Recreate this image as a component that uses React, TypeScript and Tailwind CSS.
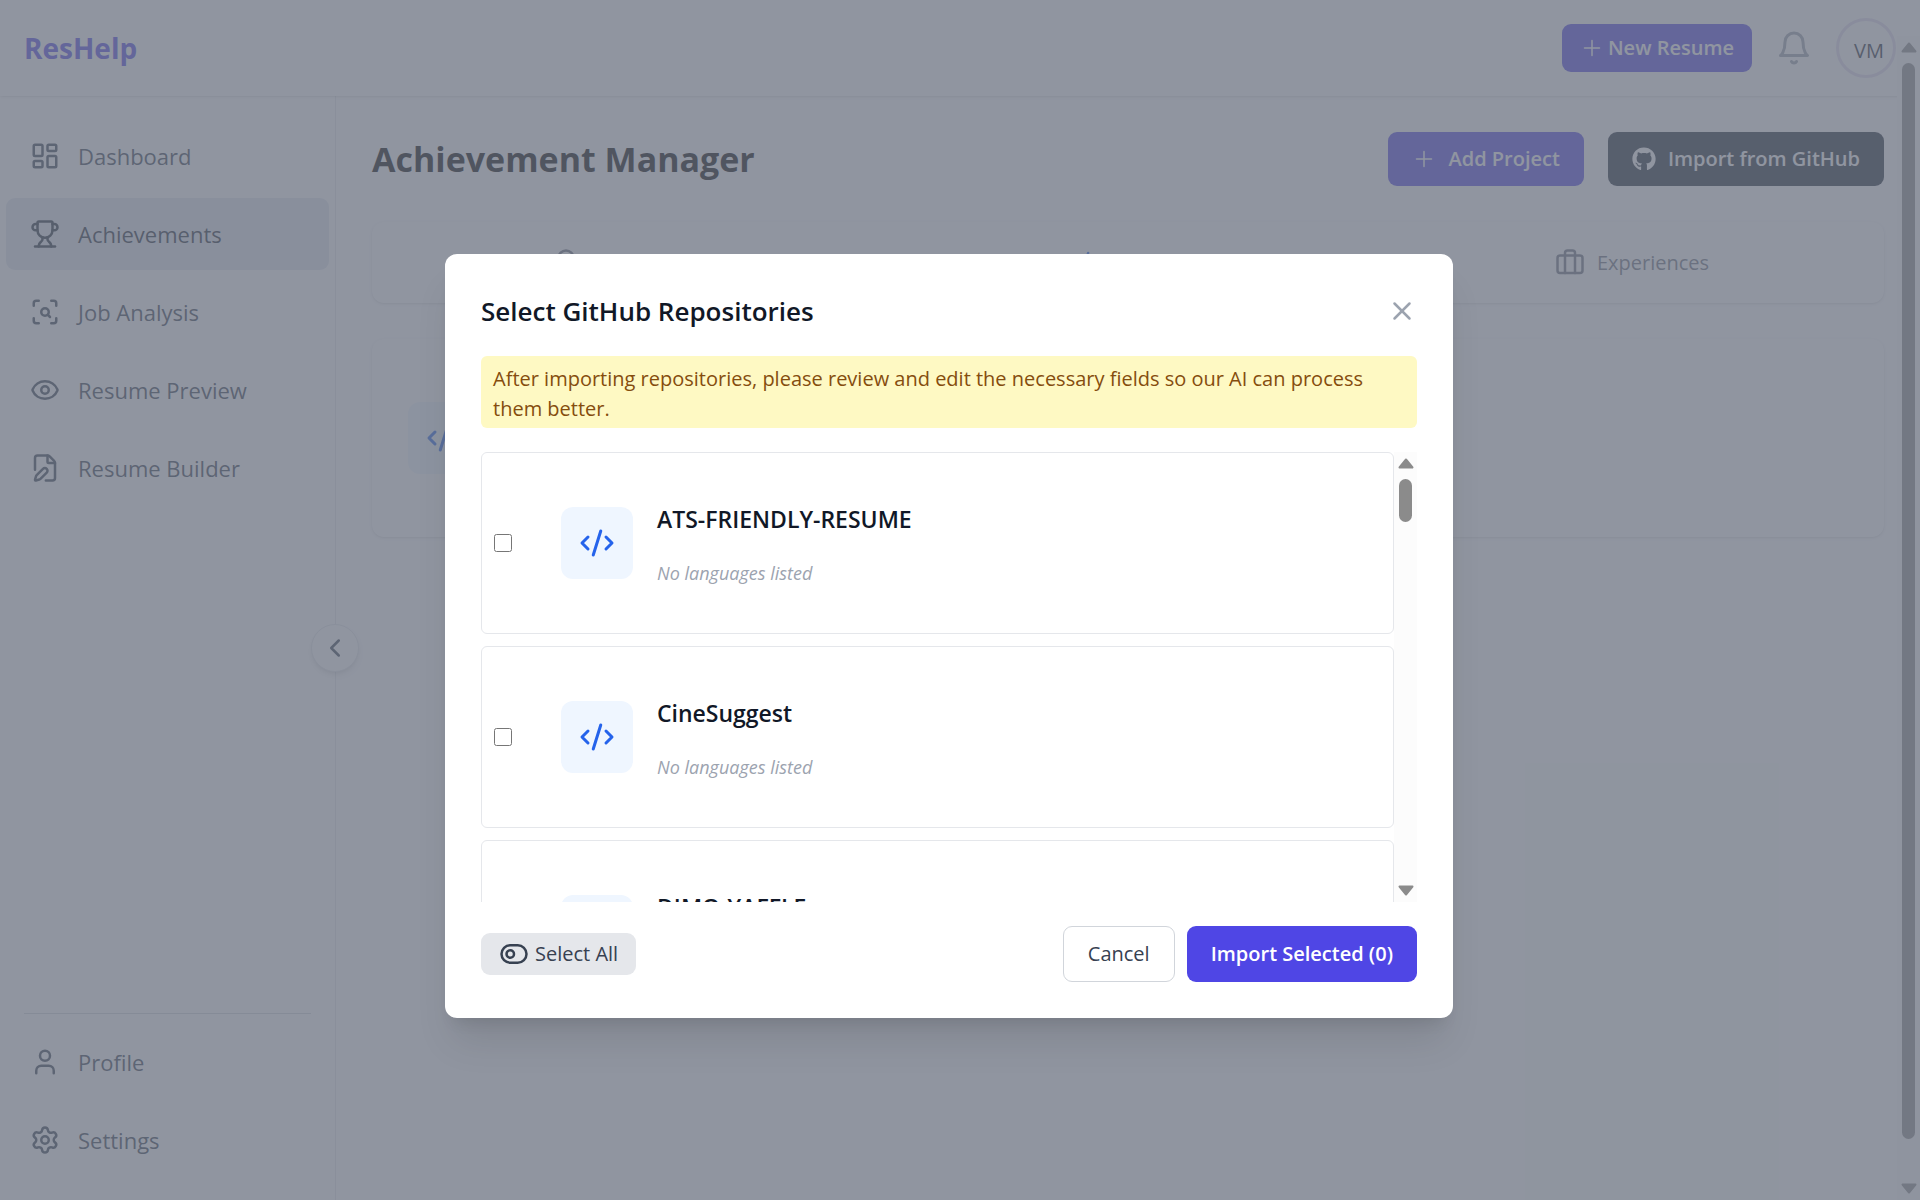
import { useState, type ReactNode } from "react";
import {
  Award,
  Briefcase,
  ChevronLeft,
  CodeXml,
  Eye,
  FilePen,
  LayoutDashboard,
  ScanSearch,
  Settings,
  ToggleLeft,
  Trophy,
  User,
  X,
  type LucideIcon,
} from "lucide-react";
import { FaGithub } from "react-icons/fa";

const mainNav: { label: string; icon: LucideIcon; active?: boolean }[] = [
  { label: "Dashboard", icon: LayoutDashboard },
  { label: "Achievements", icon: Trophy, active: true },
  { label: "Job Analysis", icon: ScanSearch },
  { label: "Resume Preview", icon: Eye },
  { label: "Resume Builder", icon: FilePen },
];

const accountNav: { label: string; icon: LucideIcon; active?: boolean }[] = [
  { label: "Profile", icon: User },
  { label: "Settings", icon: Settings },
];

const repositories = ["ATS-FRIENDLY-RESUME", "CineSuggest", "DIMO-YAFFLE"];

function PlusIcon() {
  return (
    <svg viewBox="0 0 24 24" className="size-6 shrink-0" fill="none" stroke="currentColor" strokeWidth="1.5" strokeLinecap="round" aria-hidden="true">
      <path d="M12 4.5v15m7.5-7.5h-15" />
    </svg>
  );
}

function BellIcon() {
  return (
    <svg viewBox="0 0 24 24" className="size-9" fill="none" stroke="currentColor" strokeWidth="2" strokeLinecap="round" strokeLinejoin="round" aria-hidden="true">
      <path d="M6 8a6 6 0 0 1 12 0c0 7 3 9 3 9H3s3-2 3-9" />
      <path d="M10.3 21a1.94 1.94 0 0 0 3.4 0" />
    </svg>
  );
}

function ScrollArrow({ down = false }: { down?: boolean }) {
  return (
    <svg viewBox="0 0 16 11" className={down ? "h-[11px] w-4 rotate-180" : "h-[11px] w-4"} aria-hidden="true">
      <path d="M8 1.5 14.5 9.5H1.5Z" fill="#8b8b8b" stroke="#8b8b8b" strokeWidth="2" strokeLinejoin="round" />
    </svg>
  );
}

function NavItem({ label, icon: Icon, active }: { label: string; icon: LucideIcon; active?: boolean }) {
  return (
    <a
      href="#"
      aria-current={active ? "page" : undefined}
      className={
        active
          ? "flex h-18 items-center gap-[18px] rounded-[9px] bg-[#e2e8f0] pl-6 text-[22px] text-[#1f2937]"
          : "flex h-18 items-center gap-[18px] rounded-[9px] pl-6 text-[22px] text-[#374151]"
      }
    >
      <Icon size={30} aria-hidden="true" />
      <span>{label}</span>
    </a>
  );
}

function Tab({ icon: Icon, label, active }: { icon: LucideIcon; label: string; active?: boolean }) {
  return (
    <button
      type="button"
      className={
        active
          ? "flex flex-1 items-center justify-center gap-3 text-xl font-medium text-[#2563eb]"
          : "flex flex-1 items-center justify-center gap-3 text-xl font-medium text-[#6b7280]"
      }
    >
      <Icon size={30} aria-hidden="true" />
      {label}
    </button>
  );
}

function CodeTile() {
  return (
    <div className="flex size-18 shrink-0 items-center justify-center rounded-xl bg-[#eff6ff] text-[#2563eb]">
      <CodeXml size={36} aria-hidden="true" />
    </div>
  );
}

function Header() {
  return (
    <header className="relative z-10 flex h-24 shrink-0 items-center justify-between bg-white px-6 shadow">
      <a href="#" className="text-[28px] font-bold text-[#4f46e5]">
        ResHelp
      </a>
      <div className="flex items-center gap-6">
        <button type="button" className="flex h-12 items-center gap-1 rounded-[9px] bg-[#4f46e5] px-[18px] text-xl font-semibold text-white">
          <PlusIcon />
          New Resume
        </button>
        <button type="button" aria-label="Notifications" className="text-[#9ca3af]">
          <BellIcon />
        </button>
        <button type="button" aria-label="Account" className="flex size-15 items-center justify-center rounded-full border-3 border-[#e2dcf0] pt-1.5 pl-1.5 text-xl text-[#1f2937]">
          VM
        </button>
      </div>
    </header>
  );
}

function Sidebar() {
  return (
    <aside className="relative flex w-84 shrink-0 flex-col border-r border-[#e5e7eb] bg-white pt-6 pb-6">
      <nav className="flex flex-1 flex-col gap-1.5 px-1.5" aria-label="Main">
        {mainNav.map((item) => (
          <NavItem key={item.label} {...item} />
        ))}
      </nav>
      <div className="mx-6 mb-3 border-t border-[#d1d5db]" />
      <nav className="flex flex-col gap-1.5 px-1.5" aria-label="Account">
        {accountNav.map((item) => (
          <NavItem key={item.label} {...item} />
        ))}
      </nav>
      <button
        type="button"
        aria-label="Collapse sidebar"
        className="absolute top-1/2 -right-6 flex size-12 -translate-y-1/2 items-center justify-center rounded-full border border-[#e5e7eb] bg-white text-[#374151] shadow-md"
      >
        <ChevronLeft size={30} aria-hidden="true" />
      </button>
    </aside>
  );
}

function Content() {
  return (
    <main className="flex min-w-0 flex-1 flex-col gap-9 bg-[#fdfdfe] p-9">
      <div className="flex items-center justify-between">
        <h1 className="text-[34px] leading-[54px] font-bold text-black">Achievement Manager</h1>
        <div className="flex gap-6">
          <button type="button" className="flex h-[54px] items-center gap-3 rounded-[9px] bg-[#4f46e5] px-6 text-xl font-semibold text-white">
            <PlusIcon />
            Add Project
          </button>
          <button type="button" className="flex h-[54px] items-center gap-3 rounded-[9px] bg-[#1f2937] px-6 text-xl font-semibold text-white">
            <FaGithub size={24} aria-hidden="true" />
            Import from GitHub
          </button>
        </div>
      </div>
      <div className="flex h-[81px] rounded-xl bg-white shadow-sm">
        <Tab icon={Award} label="Certificates" />
        <Tab icon={CodeXml} label="Projects" active />
        <Tab icon={Briefcase} label="Experiences" />
      </div>
      <div className="flex h-[198px] items-center rounded-xl bg-white px-9 shadow-sm">
        <CodeTile />
      </div>
    </main>
  );
}

function RepoRow({ name, checked, onToggle }: { name: string; checked: boolean; onToggle: () => void }) {
  return (
    <li>
      <label className="flex items-center gap-[49px] rounded-md border border-[#e5e7eb] p-3">
        <input type="checkbox" checked={checked} onChange={onToggle} aria-label={name} className="size-[18px] shrink-0" />
        <span className="flex items-center gap-6 py-9">
          <CodeTile />
          <span className="flex flex-col gap-6">
            <span className="text-[23px] leading-9 font-semibold text-[#111827]">{name}</span>
            <span className="text-lg leading-6 text-[#9ca3af] italic">No languages listed</span>
          </span>
        </span>
      </label>
    </li>
  );
}

function FooterButton({ children, primary }: { children: ReactNode; primary?: boolean }) {
  return (
    <button
      type="button"
      className={
        primary
          ? "h-14 rounded-[9px] bg-[#4f46e5] px-6 text-xl font-semibold text-white"
          : "h-14 rounded-[9px] border border-[#d1d5db] px-6 text-xl text-[#374151]"
      }
    >
      {children}
    </button>
  );
}

function ImportDialog() {
  const [selected, setSelected] = useState<string[]>([]);
  const toggle = (name: string) =>
    setSelected((now) => (now.includes(name) ? now.filter((n) => n !== name) : [...now, name]));
  const toggleAll = () => setSelected((now) => (now.length === repositories.length ? [] : repositories));

  return (
    <div
      role="dialog"
      aria-labelledby="dialog-title"
      className="w-full max-w-[1008px] rounded-xl bg-white p-9 shadow-[0_30px_38px_-8px_rgba(0,0,0,0.1),0_12px_15px_-9px_rgba(0,0,0,0.1)]"
    >
      <div className="mb-6 flex items-center justify-between">
        <h2 id="dialog-title" className="text-[26px] leading-[42px] font-semibold text-[#111827]">
          Select GitHub Repositories
        </h2>
        <button type="button" aria-label="Close" className="text-[#9ca3af]">
          <X size={30} />
        </button>
      </div>
      <p className="mb-6 rounded-md bg-[#fef9c3] px-3 pt-2 pb-1 text-xl leading-[30px] text-[#854d0e]">
        After importing repositories, please review and edit the necessary fields so our AI can process them better.
      </p>
      <div className="mb-6 flex h-[450px] overflow-hidden">
        <ul className="flex min-w-0 flex-1 flex-col gap-3">
          {repositories.map((name) => (
            <RepoRow key={name} name={name} checked={selected.includes(name)} onToggle={() => toggle(name)} />
          ))}
        </ul>
        <div className="flex w-[23px] flex-col items-center bg-[#fcfcfc] py-1.5">
          <ScrollArrow />
          <div className="mt-2.5 h-[43px] w-[13px] rounded-full bg-[#8b8b8b]" />
          <div className="flex-1" />
          <ScrollArrow down />
        </div>
      </div>
      <div className="flex items-center justify-between">
        <button type="button" onClick={toggleAll} className="flex h-[42px] items-center gap-1.5 rounded-[9px] bg-[#e5e7eb] px-[18px] text-xl text-[#374151]">
          <ToggleLeft size={30} aria-hidden="true" />
          Select All
        </button>
        <div className="flex gap-3">
          <FooterButton>Cancel</FooterButton>
          <FooterButton primary>Import Selected ({selected.length})</FooterButton>
        </div>
      </div>
    </div>
  );
}

export default function App() {
  return (
    <div className="relative flex min-h-screen flex-col overflow-hidden bg-white font-['Open_Sans',sans-serif]">
      <Header />
      <div className="flex flex-1">
        <Sidebar />
        <Content />
      </div>
      <div className="absolute top-9 right-0 bottom-0 z-20 flex w-[23px] flex-col items-center bg-[#fcfcfc] py-1.5">
        <ScrollArrow />
        <div className="mt-2.5 mb-11 w-[13px] flex-1 rounded-full bg-[#8b8b8b]" />
        <ScrollArrow down />
      </div>
      <div className="absolute inset-0 z-30 flex items-center justify-center bg-[#6b7280]/75 pt-18 pr-[22px]">
        <ImportDialog />
      </div>
    </div>
  );
}
